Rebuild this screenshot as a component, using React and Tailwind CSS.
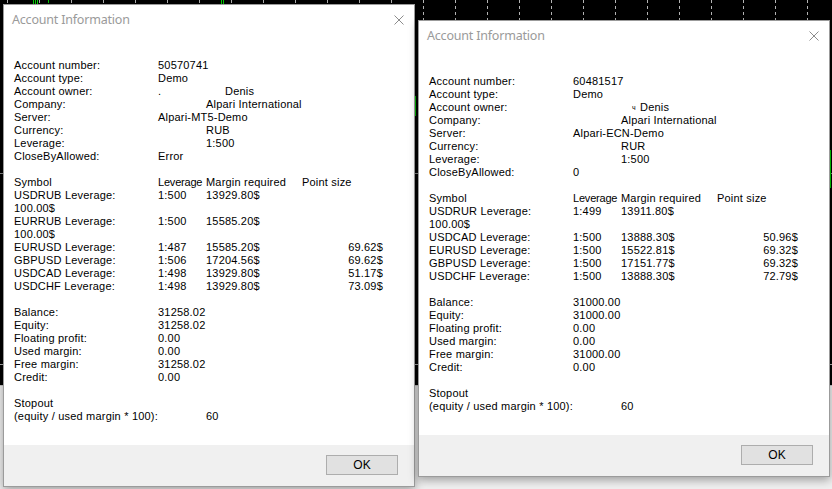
import React from "react";

const info1 = [
{ label: "Account number:", value: "50570741" },
{ label: "Account type:", value: "Demo" },
{ label: "Account owner:", owner: ".", name: "Denis" },
{ label: "Company:", value: "Alpari International", indent: true },
{ label: "Server:", value: "Alpari-MT5-Demo" },
{ label: "Currency:", value: "RUB", indent: true },
{ label: "Leverage:", value: "1:500", indent: true },
{ label: "CloseByAllowed:", value: "Error" }];

const info2 = [
{ label: "Account number:", value: "60481517" },
{ label: "Account type:", value: "Demo" },
{ label: "Account owner:", owner: "", name: "Denis", mark: true },
{ label: "Company:", value: "Alpari International", indent: true },
{ label: "Server:", value: "Alpari-ECN-Demo" },
{ label: "Currency:", value: "RUR", indent: true },
{ label: "Leverage:", value: "1:500", indent: true },
{ label: "CloseByAllowed:", value: "0" }];

const symbols1 = [
{ name: "USDRUB Leverage:", lev: "1:500", margin: "13929.80$", wrap: "100.00$" },
{ name: "EURRUB Leverage:", lev: "1:500", margin: "15585.20$", wrap: "100.00$" },
{ name: "EURUSD Leverage:", lev: "1:487", margin: "15585.20$", point: "69.62$" },
{ name: "GBPUSD Leverage:", lev: "1:506", margin: "17204.56$", point: "69.62$" },
{ name: "USDCAD Leverage:", lev: "1:498", margin: "13929.80$", point: "51.17$" },
{ name: "USDCHF Leverage:", lev: "1:498", margin: "13929.80$", point: "73.09$" }];

const symbols2 = [
{ name: "USDRUR Leverage:", lev: "1:499", margin: "13911.80$", wrap: "100.00$" },
{ name: "USDCAD Leverage:", lev: "1:500", margin: "13888.30$", point: "50.96$" },
{ name: "EURUSD Leverage:", lev: "1:500", margin: "15522.81$", point: "69.32$" },
{ name: "GBPUSD Leverage:", lev: "1:500", margin: "17151.77$", point: "69.32$" },
{ name: "USDCHF Leverage:", lev: "1:500", margin: "13888.30$", point: "72.79$" }];

const money1 = [
["Balance:", "31258.02"],
["Equity:", "31258.02"],
["Floating profit:", "0.00"],
["Used margin:", "0.00"],
["Free margin:", "31258.02"],
["Credit:", "0.00"]];

const money2 = [
["Balance:", "31000.00"],
["Equity:", "31000.00"],
["Floating profit:", "0.00"],
["Used margin:", "0.00"],
["Free margin:", "31000.00"],
["Credit:", "0.00"]];

const row = "grid grid-cols-[144px_48px_96px_81px] h-[13px] leading-[13px] whitespace-nowrap";

function Blank() {
  return <div className="h-[13px]" />;
}

function InfoRow({ item }) {
  return (
    <div className={row}>
      <span>{item.label}</span>
      {item.name ?
      <span className="col-span-3 flex">
          <span className="w-[59px]">{item.owner}</span>
          {item.mark ?
        <span className="w-[8px] text-[7px] leading-[13px]">ч</span> :
        <span className="w-[8px]" />}
          <span>{item.name}</span>
        </span> :

      <span className={`col-span-3 ${item.indent ? "pl-[48px]" : ""}`}>{item.value}</span>
      }
    </div>);

}

function Dialog({ className, info, symbols, money }) {
  return (
    <div className={`absolute w-[412px] bg-white border border-[#9b9b9b] shadow-[0_3px_9px_rgba(0,0,0,0.35)] flex flex-col font-['Liberation_Sans',Arial,sans-serif] ${className}`}>
      <div className="h-[30px] flex items-center justify-between pl-[8px] pr-[10px]">
        <span className="text-[12.5px] text-[#9a9a9a] font-['Noto_Sans',sans-serif] tracking-[-0.2px]">Account Information</span>
        <svg width="10" height="10" viewBox="0 0 10 10">
          <path d="M0.5 0.5 L9.5 9.5 M9.5 0.5 L0.5 9.5" stroke="#8c8c8c" strokeWidth="1" fill="none" />
        </svg>
      </div>

      <div className="pt-[24px] pb-[22px] pl-[10px] text-[11px] tracking-[0.2px] text-black">
        {info.map((item) => <InfoRow key={item.label} item={item} />)}
        <Blank />
        <div className={row}>
          <span>Symbol</span>
          <span className="tracking-[-0.2px]">Leverage</span>
          <span>Margin required</span>
          <span>Point size</span>
        </div>
        {symbols.map((s) =>
        <React.Fragment key={s.name}>
            <div className={row}>
              <span>{s.name}</span>
              <span>{s.lev}</span>
              <span>{s.margin}</span>
              <span className="text-right">{s.point}</span>
            </div>
            {s.wrap &&
          <div className={row}>
                <span>{s.wrap}</span>
              </div>
          }
          </React.Fragment>
        )}
        <Blank />
        {money.map(([label, value]) =>
        <div key={label} className={row}>
            <span>{label}</span>
            <span className="col-span-3">{value}</span>
          </div>
        )}
        <Blank />
        <div className={row}>
          <span>Stopout</span>
        </div>
        <div className={row}>
          <span>(equity / used margin * 100):</span>
          <span />
          <span>60</span>
        </div>
      </div>

      <div className="h-[41px] bg-[#f0f0f0] flex justify-end items-start pt-[10px] pr-[16px]">
        <button className="w-[72px] h-[20px] bg-[#e1e1e1] border border-[#adadad] text-[12px] leading-[18px] text-black">
          OK
        </button>
      </div>
    </div>);

}

function Chart() {
  const xs = [];
  for (let x = 7; x < 832; x += 32) xs.push(x);
  return (
    <svg className="absolute inset-0" width="832" height="489">
      <rect width="832" height="489" fill="#000" />
      {xs.map((x) =>
      <line key={x} x1={x + 0.5} y1="0" x2={x + 0.5} y2="364" stroke="#b4b4b4" strokeDasharray="3 3" />
      )}
      <line x1="0" y1="173.5" x2="832" y2="173.5" stroke="#8a8a8a" />
      <rect x="33" y="0" width="1" height="5" fill="#00d000" />
      <rect x="35" y="0" width="1" height="5" fill="#00d000" />
      <rect x="37" y="0" width="1" height="5" fill="#00d000" />
      <rect x="48" y="0" width="1" height="3" fill="#00d000" />
      <rect x="221" y="0" width="1" height="5" fill="#00d000" />
      <rect x="223" y="0" width="1" height="5" fill="#00d000" />
      <rect x="415" y="96" width="1" height="20" fill="#00d000" />
      <rect x="830" y="150" width="1" height="38" fill="#00d000" />
      <line x1="0" y1="364.5" x2="832" y2="364.5" stroke="#b0b0b0" />
      <rect x="0" y="385" width="832" height="104" fill="#c8c8c8" />
      <rect x="0" y="386" width="832" height="103" fill="#f0f0f0" />
    </svg>);

}

export default function App() {
  return (
    <div className="relative w-[832px] h-[489px] overflow-hidden bg-black">
      <Chart />
      <Dialog className="left-[3px] top-[4px]" info={info1} symbols={symbols1} money={money1} />
      <Dialog className="left-[418px] top-[20px]" info={info2} symbols={symbols2} money={money2} />
    </div>);

}
